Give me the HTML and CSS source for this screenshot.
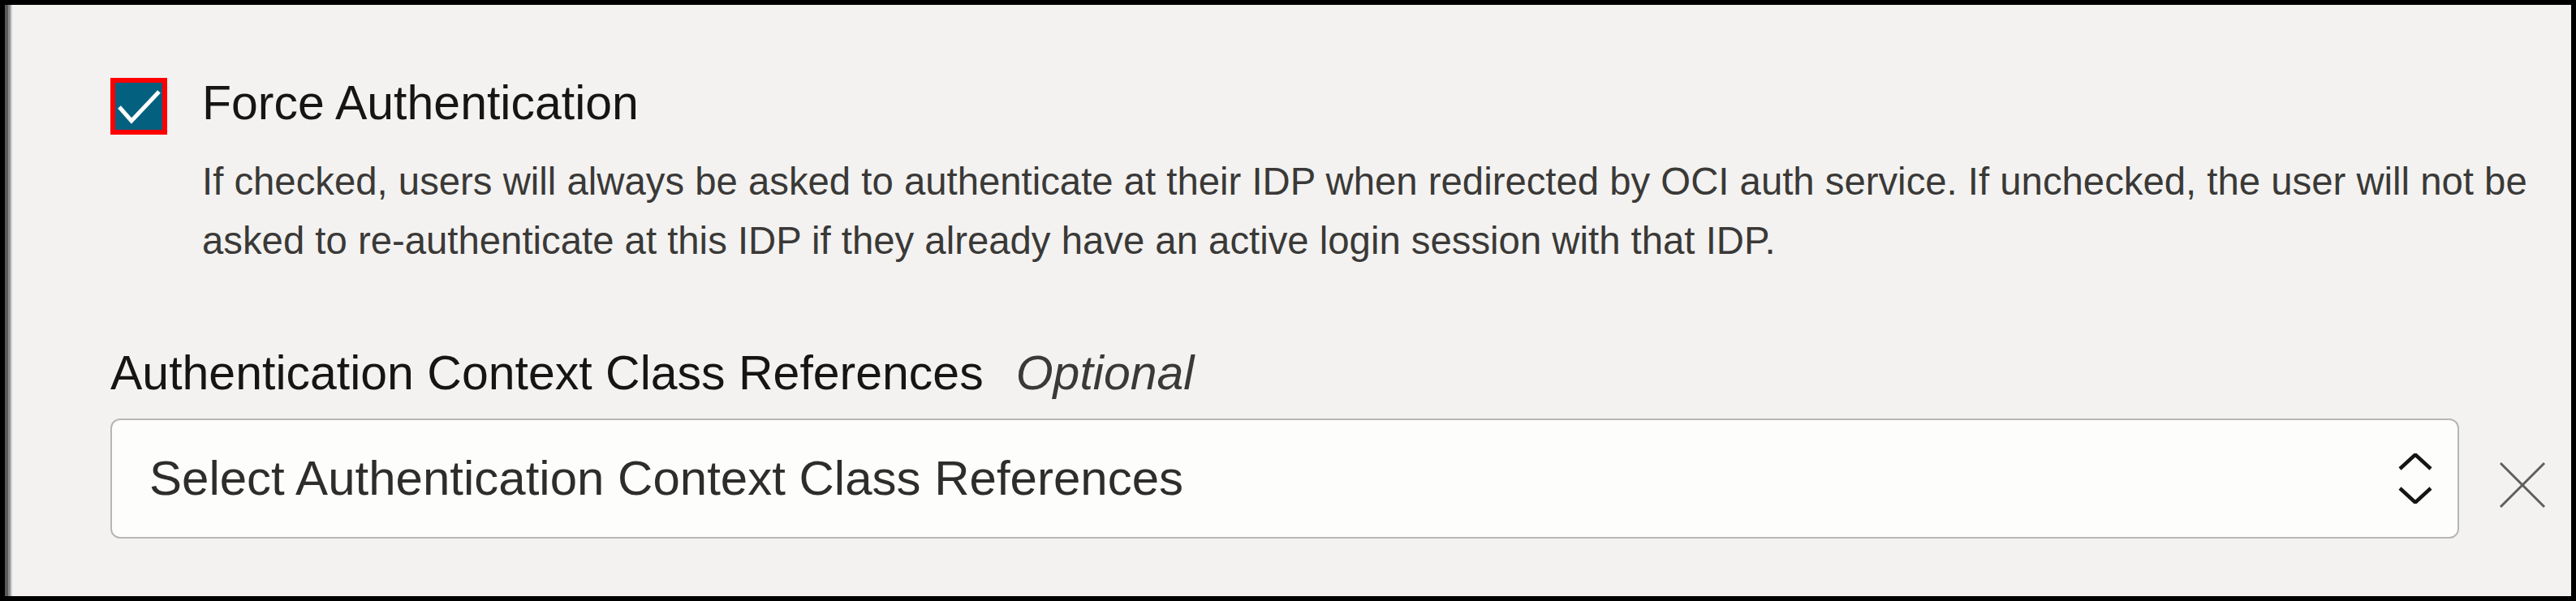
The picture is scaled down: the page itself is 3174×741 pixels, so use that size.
FILE: index.html
```html
<!DOCTYPE html>
<html lang="en">
<head>
<meta charset="utf-8">
<title>Force Authentication</title>
<link rel="stylesheet" href="styles.css">
</head>
<body>
<div class="frame">
  <div class="check-row">
    <span class="checkbox" role="checkbox" aria-checked="true">
      <svg class="checkmark" viewBox="0 0 58 58" width="58" height="58" aria-hidden="true">
        <path d="M5 30 L20 47 L54 11" fill="none" stroke="#ffffff" stroke-width="5" stroke-linejoin="miter"/>
      </svg>
    </span>
    <div class="check-text">
      <div class="check-title">Force Authentication</div>
      <div class="check-desc">If checked, users will always be asked to authenticate at their IDP when redirected by OCI auth service. If unchecked, the user will not be asked to re-authenticate at this IDP if they already have an active login session with that IDP.</div>
    </div>
  </div>
  <div class="field">
    <div class="field-label">Authentication Context Class References<span class="optional">Optional</span></div>
    <div class="select-row">
      <div class="select">
        <span class="select-text">Select Authentication Context Class References</span>
        <svg class="chevrons" viewBox="0 0 42 62" width="42" height="62" aria-hidden="true">
          <path d="M2 19 L21 1.5 L40 19" fill="none" stroke="#161513" stroke-width="4.5"/>
          <path d="M2 43 L21 60.5 L40 43" fill="none" stroke="#161513" stroke-width="4.5"/>
        </svg>
      </div>
      <span class="clear" aria-label="Clear">
        <svg viewBox="0 0 58 58" width="58" height="58" aria-hidden="true">
          <path d="M2 2 L56 56 M56 2 L2 56" fill="none" stroke="#5f5e5c" stroke-width="3"/>
        </svg>
      </span>
    </div>
  </div>
</div>
</body>
</html>
```

FILE: styles.css
```css
html, body {
  margin: 0;
  padding: 0;
  background: #000000;
}

.frame {
  box-sizing: border-box;
  width: 3174px;
  height: 741px;
  border: 6px solid #000000;
  background:
    linear-gradient(90deg, #5a5a5a 0px, #5a5a5a 4px, #8e8e8e 4px, #8e8e8e 7px, #d0cfcd 7px, #d0cfcd 9px, #f3f2f0 9px) no-repeat,
    #f3f2f0;
  padding: 86px 31px 0 130px;
  font-family: "Liberation Sans", Arial, Helvetica, sans-serif;
  color: #161513;
  overflow: hidden;
}

.check-row {
  display: flex;
  align-items: flex-start;
  gap: 43px;
}

.checkbox {
  box-sizing: border-box;
  flex: 0 0 auto;
  width: 70px;
  height: 70px;
  margin-top: 4px;
  border: 6px solid #ff0000;
  background: #03607f;
  display: flex;
}

.checkmark {
  display: block;
}

.check-text {
  flex: 1 1 auto;
  min-width: 0;
}

.check-title {
  font-size: 59px;
  line-height: 70px;
  color: #161513;
}

.check-desc {
  margin-top: 25px;
  font-size: 47.3px;
  line-height: 73px;
  color: #3a3937;
}

.field {
  margin-top: 92px;
}

.field-label {
  font-size: 59px;
  line-height: 70px;
  color: #161513;
}

.optional {
  margin-left: 40px;
  font-style: italic;
  color: #3a3937;
}

.select-row {
  margin-top: 21px;
  display: flex;
  align-items: center;
  gap: 49px;
}

.select {
  box-sizing: border-box;
  flex: 1 1 auto;
  height: 148px;
  border: 2px solid #b8b6b3;
  border-radius: 12px;
  background: #fdfdfc;
  display: flex;
  align-items: center;
  justify-content: space-between;
  padding: 0 31px 0 46px;
}

.select-text {
  font-size: 60px;
  line-height: 70px;
  color: #2e2d2c;
}

.chevrons {
  display: block;
  flex: 0 0 auto;
}

.clear {
  flex: 0 0 auto;
  display: flex;
  width: 58px;
  height: 58px;
  margin-top: 16px;
}
```
